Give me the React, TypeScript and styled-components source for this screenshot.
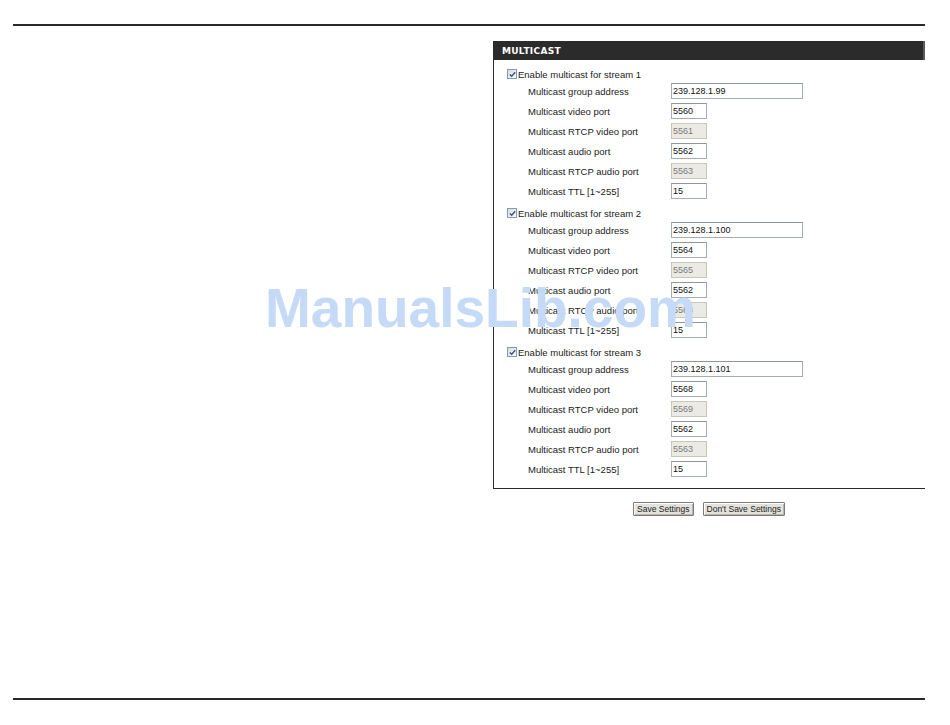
import React from 'react'
import styled, { createGlobalStyle } from 'styled-components'

const GlobalStyle = createGlobalStyle`
  html, body {
    margin: 0;
    padding: 0;
    background: #ffffff;
  }
`

interface PortRow {
  label: string
  value: string
  wide?: boolean
  disabled?: boolean
}

interface Stream {
  title: string
  rows: PortRow[]
}

const streams: Stream[] = [
  {
    title: 'Enable multicast for stream 1',
    rows: [
      { label: 'Multicast group address', value: '239.128.1.99', wide: true },
      { label: 'Multicast video port', value: '5560' },
      { label: 'Multicast RTCP video port', value: '5561', disabled: true },
      { label: 'Multicast audio port', value: '5562' },
      { label: 'Multicast RTCP audio port', value: '5563', disabled: true },
      { label: 'Multicast TTL [1~255]', value: '15' },
    ],
  },
  {
    title: 'Enable multicast for stream 2',
    rows: [
      { label: 'Multicast group address', value: '239.128.1.100', wide: true },
      { label: 'Multicast video port', value: '5564' },
      { label: 'Multicast RTCP video port', value: '5565', disabled: true },
      { label: 'Multicast audio port', value: '5562' },
      { label: 'Multicast RTCP audio port', value: '5563', disabled: true },
      { label: 'Multicast TTL [1~255]', value: '15' },
    ],
  },
  {
    title: 'Enable multicast for stream 3',
    rows: [
      { label: 'Multicast group address', value: '239.128.1.101', wide: true },
      { label: 'Multicast video port', value: '5568' },
      { label: 'Multicast RTCP video port', value: '5569', disabled: true },
      { label: 'Multicast audio port', value: '5562' },
      { label: 'Multicast RTCP audio port', value: '5563', disabled: true },
      { label: 'Multicast TTL [1~255]', value: '15' },
    ],
  },
]

const Page = styled.div`
  position: relative;
  height: 725px;
  display: flex;
  flex-direction: column;
  padding: 24px 25px 25px 13px;
  box-sizing: border-box;
  font-family: 'Liberation Sans', Arial, sans-serif;
`

const Rule = styled.div`
  height: 2px;
  background: #2a2a2a;
`

const FooterRule = styled(Rule)`
  margin-top: auto;
`

const Content = styled.div`
  display: flex;
  justify-content: flex-end;
  padding-top: 15px;
`

const Column = styled.div`
  width: 432px;
  display: flex;
  flex-direction: column;
`

const PanelHeader = styled.div`
  height: 19px;
  background: #2b2b2b;
  border-right: 2px solid #5a5a5a;
  color: #ffffff;
  font-family: 'DejaVu Sans', Verdana, sans-serif;
  font-weight: bold;
  font-size: 9px;
  letter-spacing: 0.3px;
  display: flex;
  align-items: center;
  padding-left: 9px;
`

const PanelBody = styled.div`
  border-left: 1px solid #2a2a2a;
  border-bottom: 1px solid #2a2a2a;
  padding: 3px 0 8px 0;
`

const StreamBlock = styled.div`
  margin-bottom: 1px;
`

const StreamHeader = styled.label`
  display: flex;
  align-items: center;
  height: 14px;
  padding-top: 4px;
  padding-left: 13px;
  font-size: 9.5px;
  color: #222;
`

const CheckBox = styled.span`
  box-sizing: border-box;
  width: 10px;
  height: 10px;
  border: 1px solid #7f9db9;
  background: linear-gradient(135deg, #dcdcd6, #fbfbf9);
  margin-right: 1px;
  display: inline-flex;
  align-items: center;
  justify-content: center;
`

const Row = styled.div`
  display: flex;
  align-items: center;
  height: 20px;
  padding-left: 34px;
`

const Label = styled.span`
  width: 143px;
  font-size: 9.5px;
  color: #222;
  white-space: nowrap;
`

const Field = styled.input<{ $wide?: boolean }>`
  box-sizing: border-box;
  width: ${(p) => (p.$wide ? '132px' : '36px')};
  height: 16px;
  padding: 0 1px;
  margin: 0;
  border: 1px solid #a5acb2;
  border-top-color: #8f969c;
  font-family: 'Liberation Sans', Arial, sans-serif;
  font-size: 9px;
  color: #111;
  background: #ffffff;
  outline: none;

  &:disabled {
    background: #ebeae5;
    color: #7a7a7a;
    border-color: #c9c7ba;
  }
`

const Buttons = styled.div`
  display: flex;
  justify-content: center;
  gap: 9px;
  padding-top: 13px;
`

const Button = styled.button`
  height: 14px;
  padding: 0 3px;
  margin: 0;
  font-family: 'Liberation Sans', Arial, sans-serif;
  font-size: 8.5px;
  line-height: 12px;
  color: #222;
  background: #e4e2dc;
  border: 1px solid #7a7a7a;
  box-shadow: inset 1px 1px 0 #ffffff, inset -1px -1px 0 #b8b5ab;
  border-radius: 1px;
`

const Watermark = styled.div`
  position: absolute;
  left: 265px;
  top: 281px;
  font-family: 'Liberation Sans', Arial, sans-serif;
  font-weight: bold;
  font-size: 55px;
  line-height: 54px;
  color: #c4daf6;
  pointer-events: none;
  white-space: nowrap;
`

function Check() {
  return (
    <svg width="7" height="7" viewBox="0 0 7 7">
      <path d="M0.8 3.4 L2.7 5.3 L6.2 1.2" fill="none" stroke="#3d4f86" strokeWidth="1.4" />
    </svg>
  )
}

export default function App(): JSX.Element {
  return (
    <Page>
      <GlobalStyle />
      <Rule />
      <Content>
        <Column>
          <PanelHeader>MULTICAST</PanelHeader>
          <PanelBody>
            {streams.map((s) => (
              <StreamBlock key={s.title}>
                <StreamHeader>
                  <CheckBox>
                    <Check />
                  </CheckBox>
                  {s.title}
                </StreamHeader>
                {s.rows.map((r) => (
                  <Row key={r.label}>
                    <Label>{r.label}</Label>
                    <Field $wide={r.wide} disabled={r.disabled} defaultValue={r.value} />
                  </Row>
                ))}
              </StreamBlock>
            ))}
          </PanelBody>
          <Buttons>
            <Button>Save Settings</Button>
            <Button>Don't Save Settings</Button>
          </Buttons>
        </Column>
      </Content>
      <FooterRule />
      <Watermark>ManualsLib.com</Watermark>
    </Page>
  )
}
